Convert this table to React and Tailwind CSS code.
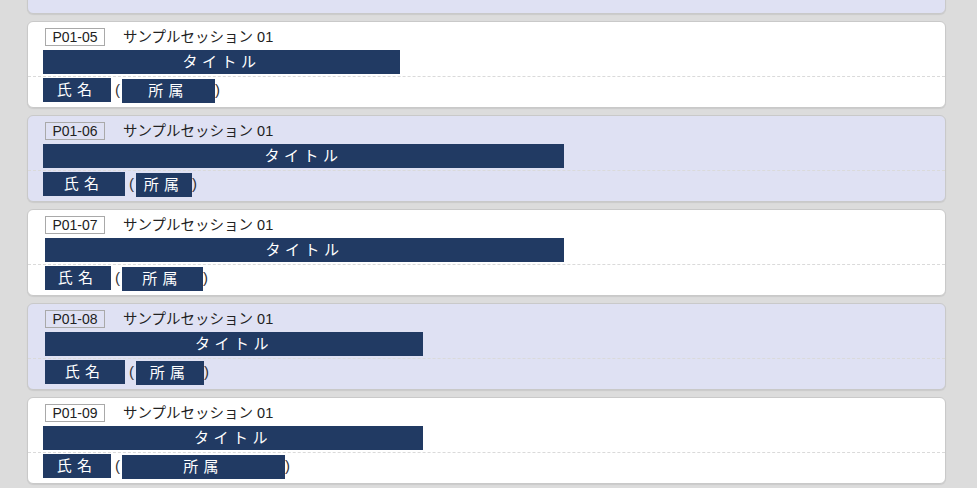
import React from "react";

const sessions = [
  { code: "P01-05", bg: "white", title: 357, name: 68, aff: 93, shift: 0 },
  { code: "P01-06", bg: "lavender", title: 521, name: 82, aff: 56, shift: 0 },
  { code: "P01-07", bg: "white", title: 519, name: 66, aff: 81, shift: 2 },
  { code: "P01-08", bg: "lavender", title: 378, name: 80, aff: 68, shift: 2 },
  { code: "P01-09", bg: "white", title: 380, name: 68, aff: 163, shift: 0 },
];

function SessionCard({ s }) {
  return (
    <div
      className={
        "h-[87px] shrink-0 rounded-[6px] border border-[#c9c9c9] shadow-[0_1px_1px_rgba(0,0,0,0.08)] " +
        (s.bg === "white" ? "bg-white" : "bg-[#dfe1f3]")
      }
    >
      {/* header */}
      <div className="mt-[6px] flex h-[18px] items-center pl-[17px]">
        <span className="flex h-[18px] w-[60px] items-center justify-center border border-[#a9a9a9] text-[14px] leading-none text-[#222]">
          {s.code}
        </span>
        <span className="ml-[18px] text-[14.5px] leading-none text-[#222]">
          サンプルセッション 01
        </span>
      </div>

      {/* title */}
      <div
        className="mt-[4px] flex h-[24px] items-center justify-center bg-[#213a63] text-[15px] tracking-[0.3em] text-white"
        style={{ width: s.title, marginLeft: 15 + s.shift }}
      >
        タイトル
      </div>

      <div className="mt-[2px] border-t border-dashed border-[#dadada]" />

      {/* author */}
      <div
        className="mt-[1px] flex items-start text-[15px] text-[#333]"
        style={{ paddingLeft: 15 + s.shift }}
      >
        <span
          className="flex h-[24px] items-center justify-center bg-[#213a63] tracking-[0.35em] text-white"
          style={{ width: s.name }}
        >
          氏名
        </span>
        <span className="ml-[4px] mt-[2px] leading-[20px]">(</span>
        <span
          className="ml-[2px] mt-[1px] flex h-[24px] items-center justify-center bg-[#213a63] tracking-[0.35em] text-white"
          style={{ width: s.aff }}
        >
          所属
        </span>
        <span className="mt-[2px] leading-[20px]">)</span>
      </div>
    </div>
  );
}

export default function App() {
  return (
    <div
      className="h-[488px] w-[977px] overflow-hidden bg-[#dcdcdc]"
      style={{ fontFamily: '"Liberation Sans", "Noto Sans CJK JP", sans-serif' }}
    >
      <div className="mt-[-73px] flex w-[946px] flex-col gap-[7px] pl-[27px]">
        {/* previous card, only its lower edge is in view */}
        <div className="h-[87px] shrink-0 rounded-[6px] border border-[#c9c9c9] bg-[#dfe1f3] shadow-[0_1px_1px_rgba(0,0,0,0.08)]" />
        {sessions.map((s) => (
          <SessionCard key={s.code} s={s} />
        ))}
      </div>
    </div>
  );
}
